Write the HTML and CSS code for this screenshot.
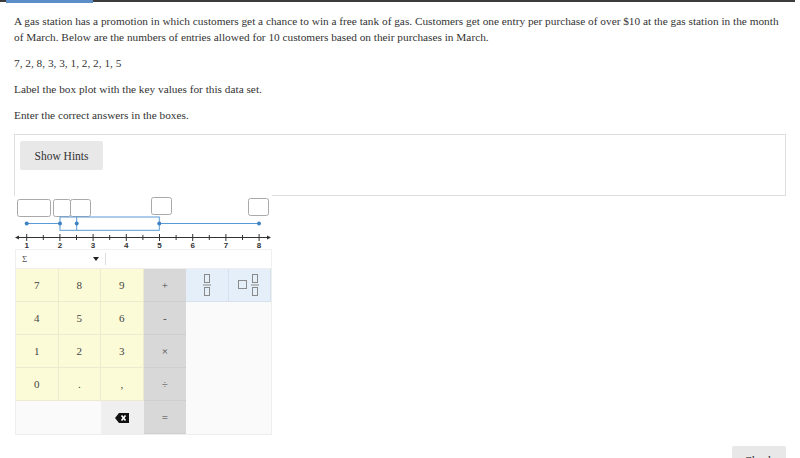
FILE: index.html
```html
<!DOCTYPE html>
<html>
<head>
<meta charset="utf-8">
<link rel="stylesheet" href="styles.css">
</head>
<body>
<div class="topbar"><div class="progress"></div></div>
<div class="content">
  <p class="q">A gas station has a promotion in which customers get a chance to win a free tank of gas. Customers get one entry per purchase of over $10 at the gas station in the month of March. Below are the numbers of entries allowed for 10 customers based on their purchases in March.</p>
  <p class="q data">7, 2, 8, 3, 3, 1, 2, 2, 1, 5</p>
  <p class="q">Label the box plot with the key values for this data set.</p>
  <p class="q">Enter the correct answers in the boxes.</p>
  <div class="hints"><button class="hint-btn">Show Hints</button></div>
  <div class="widget">
    <svg class="plot" width="256" height="54" viewBox="0 0 256 54">
      <g fill="#fff" stroke="#a9a9a9" stroke-width="1">
        <rect x="2.5" y="4.5" width="33" height="17" rx="2"/>
        <rect x="38.5" y="4.5" width="17" height="17" rx="2"/>
        <rect x="55.5" y="4.5" width="20" height="17" rx="2"/>
        <rect x="136.5" y="2.5" width="20" height="17" rx="2"/>
        <rect x="233.5" y="3.5" width="20" height="17" rx="2"/>
      </g>
      <g stroke="#5b9bd5" stroke-width="1" fill="none">
        <line x1="11.7" y1="28.5" x2="45" y2="28.5"/>
        <line x1="144.3" y1="28.5" x2="244" y2="28.5"/>
        <rect x="45" y="22" width="99.3" height="13.3"/>
        <line x1="61.7" y1="22" x2="61.7" y2="35.3"/>
      </g>
      <g fill="#3d82c4">
        <circle cx="11.7" cy="28.5" r="2"/>
        <circle cx="45" cy="28.5" r="2"/>
        <circle cx="61.7" cy="28.5" r="2"/>
        <circle cx="144.3" cy="28.5" r="2"/>
        <circle cx="244" cy="28.5" r="2"/>
      </g>
      <g stroke="#333" stroke-width="1">
        <line x1="2" y1="42.5" x2="254" y2="42.5"/>
        <line x1="11.7" y1="39" x2="11.7" y2="46"/>
        <line x1="44.9" y1="39" x2="44.9" y2="46"/>
        <line x1="78.1" y1="39" x2="78.1" y2="46"/>
        <line x1="111.3" y1="39" x2="111.3" y2="46"/>
        <line x1="144.5" y1="39" x2="144.5" y2="46"/>
        <line x1="177.7" y1="39" x2="177.7" y2="46"/>
        <line x1="210.9" y1="39" x2="210.9" y2="46"/>
        <line x1="244.1" y1="39" x2="244.1" y2="46"/>
        <line x1="28.3" y1="40" x2="28.3" y2="45"/>
        <line x1="61.5" y1="40" x2="61.5" y2="45"/>
        <line x1="94.7" y1="40" x2="94.7" y2="45"/>
        <line x1="127.9" y1="40" x2="127.9" y2="45"/>
        <line x1="161.1" y1="40" x2="161.1" y2="45"/>
        <line x1="194.3" y1="40" x2="194.3" y2="45"/>
        <line x1="227.5" y1="40" x2="227.5" y2="45"/>
      </g>
      <path d="M0 42.5 L4 40.5 L4 44.5 Z M256 42.5 L252 40.5 L252 44.5 Z" fill="#333"/>
      <g class="axis-num" text-anchor="middle">
        <text x="11.7" y="53">1</text>
        <text x="44.9" y="53">2</text>
        <text x="78.1" y="53">3</text>
        <text x="111.3" y="53">4</text>
        <text x="144.5" y="53">5</text>
        <text x="177.7" y="53">6</text>
        <text x="210.9" y="53">7</text>
        <text x="244.1" y="53">8</text>
      </g>
    </svg>
    <div class="entry">
      <div class="sym">
        <span class="sigma">Σ</span>
        <span class="caret"></span>
      </div>
      <div class="sep"></div>
    </div>
    <div class="keypad">
      <div class="key num">7</div>
      <div class="key num">8</div>
      <div class="key num">9</div>
      <div class="key op">+</div>
      <div class="key frac">
        <svg width="8" height="22" viewBox="0 0 8 22"><g fill="none" stroke="#8a8a8a" stroke-width="1"><rect x="1.5" y="0.5" width="5" height="8"/><line x1="0" y1="11" x2="8" y2="11"/><rect x="1.5" y="13.5" width="5" height="8"/></g></svg>
      </div>
      <div class="key frac">
        <svg width="22" height="22" viewBox="0 0 22 22"><g fill="none" stroke="#8a8a8a" stroke-width="1"><rect x="0.5" y="6.5" width="8" height="8"/><rect x="14.5" y="0.5" width="5" height="8"/><line x1="13" y1="11" x2="21" y2="11"/><rect x="14.5" y="13.5" width="5" height="8"/></g></svg>
      </div>
      <div class="key num">4</div>
      <div class="key num">5</div>
      <div class="key num">6</div>
      <div class="key op">-</div>
      <div class="blank-side"></div>
      <div class="key num">1</div>
      <div class="key num">2</div>
      <div class="key num">3</div>
      <div class="key op">×</div>
      <div class="key num">0</div>
      <div class="key num">.</div>
      <div class="key num">,</div>
      <div class="key op">÷</div>
      <div class="blank-bottom"></div>
      <div class="key bksp">
        <svg width="14" height="10" viewBox="0 0 14 10"><path d="M4 0 H14 V10 H4 L0 5 Z" fill="#111"/><path d="M6.5 2.5 L10.5 7.5 M10.5 2.5 L6.5 7.5" stroke="#fff" stroke-width="1.6"/></svg>
      </div>
      <div class="key op">=</div>
    </div>
  </div>
  <div class="footer"><button class="check">Check</button></div>
</div>
</body>
</html>
```

FILE: styles.css
```css
* { box-sizing: border-box; }
html, body { margin: 0; padding: 0; background: #fff; }
body {
  font-family: "Liberation Serif", "Times New Roman", serif;
  color: #333;
  font-size: 11.3px;
  line-height: 16px;
  overflow: hidden;
  height: 458px;
}
.topbar {
  height: 2px;
  background: #3c3c3c;
  margin-right: 5px;
}
.progress {
  margin-left: 6px;
  width: 87px;
  height: 3px;
  background: #5b8ec6;
}
.content {
  padding: 11px 14px 0 14px;
}
.q {
  margin: 0 0 10px 0;
}
.hints {
  border: 1px solid #dedede;
  height: 62px;
  padding: 6px 5px;
  margin-top: 11px;
}
.hint-btn {
  display: block;
  width: 83px;
  height: 29px;
  border: none;
  border-radius: 2px;
  background: #e8e8e8;
  font-family: "Liberation Serif", "Times New Roman", serif;
  font-size: 11.5px;
  color: #333;
  padding: 0;
}
.widget {
  width: 257px;
  margin: -3px 0 0 1px;
  background: #fff;
  padding-top: 2px;
}
.plot { display: block; }
.axis-num {
  font-family: "Liberation Sans", Arial, sans-serif;
  font-size: 8px;
  font-weight: bold;
  fill: #333;
}
.entry {
  display: flex;
  align-items: center;
  height: 19px;
  border: 1px solid #f0f0f0;
  border-bottom: none;
}
.sym {
  width: 89px;
  display: flex;
  align-items: center;
  justify-content: space-between;
  padding: 0 6px 0 6px;
}
.sigma { font-size: 9px; color: #555; }
.caret {
  width: 0; height: 0;
  border-left: 3px solid transparent;
  border-right: 3px solid transparent;
  border-top: 4px solid #222;
}
.sep { width: 1px; height: 12px; background: #ddd; }
.keypad {
  display: grid;
  grid-template-columns: repeat(6, 1fr);
  grid-template-rows: repeat(5, 33px);
  border: 1px solid #eee;
  background: #f9f9f9;
}
.key {
  display: flex;
  align-items: center;
  justify-content: center;
  font-size: 11px;
  color: #444;
}
.num {
  background: #fbfbd7;
  border-right: 1px solid #ecebcf;
  border-bottom: 1px solid #ecebcf;
}
.op {
  background: #d8d8d8;
  border-bottom: 1px solid #cfcfcf;
  font-size: 11px;
}
.frac {
  background: #e4eff9;
  border-right: 1px solid #d5e2ee;
  border-bottom: 1px solid #d5e2ee;
}
.blank-side {
  grid-column: 5 / 7;
  grid-row: 2 / 6;
  background: #fafafa;
}
.blank-bottom {
  grid-column: 1 / 3;
  background: #fafafa;
}
.bksp { background: #efefef; }
.footer {
  display: flex;
  justify-content: flex-end;
  margin-top: 11px;
}
.check {
  width: 54px;
  height: 30px;
  border: none;
  border-radius: 2px;
  background: #e8e8e8;
  font-family: "Liberation Serif", "Times New Roman", serif;
  font-size: 11.5px;
  color: #333;
  padding: 0;
  align-self: flex-start;
}
```
